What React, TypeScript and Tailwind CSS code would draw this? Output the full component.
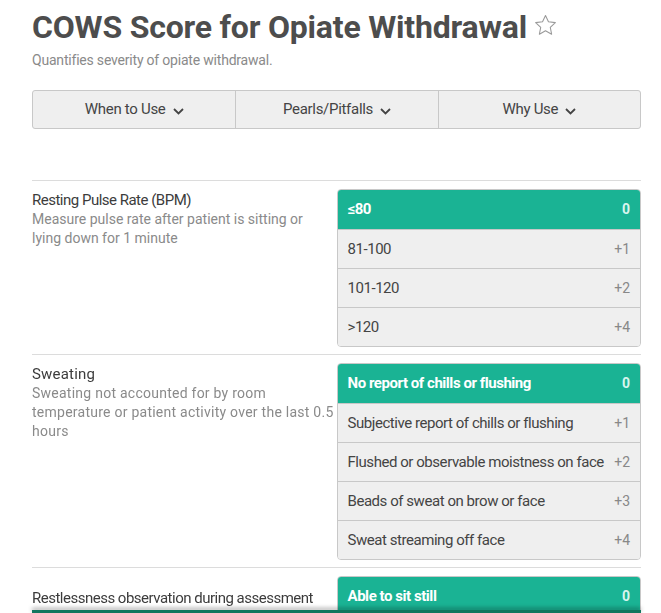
import React from "react";

type Opt = { label: string; score: string };
type Sec = { title: string; desc?: string[]; opts: Opt[]; wide?: boolean; low?: boolean };

const sections: Sec[] = [
  {
    title: "Resting Pulse Rate (BPM)",
    desc: ["Measure pulse rate after patient is sitting or", "lying down for 1 minute"],
    opts: [
      { label: "≤80", score: "0" },
      { label: "81-100", score: "+1" },
      { label: "101-120", score: "+2" },
      { label: ">120", score: "+4" },
    ],
  },
  {
    title: "Sweating",
    desc: ["Sweating not accounted for by room", "temperature or patient activity over the last 0.5", "hours"],
    wide: true,
    opts: [
      { label: "No report of chills or flushing", score: "0" },
      { label: "Subjective report of chills or flushing", score: "+1" },
      { label: "Flushed or observable moistness on face", score: "+2" },
      { label: "Beads of sweat on brow or face", score: "+3" },
      { label: "Sweat streaming off face", score: "+4" },
    ],
  },
  {
    title: "Restlessness observation during assessment",
    low: true,
    opts: [
      { label: "Able to sit still", score: "0" },
      { label: "Reports difficulty sitting still, but is able to do so", score: "+1" },
      { label: "Frequent shifting or extraneous movements of legs/arms", score: "+3" },
      { label: "Unable to sit still for more than a few seconds", score: "+5" },
    ],
  },
];

function Chevron() {
  return (
    <svg width="11" height="7" viewBox="0 0 11 7" className="ml-[7px] mt-[3px]" fill="none">
      <path d="M1 1l4.5 4.5L10 1" stroke="#444" strokeWidth="1.8" />
    </svg>
  );
}

function Star() {
  return (
    <svg width="23" height="22" viewBox="0 0 24 23" fill="none" className="ml-[7px] mt-[-4px]">
      <path
        d="M12 1.5l3.1 6.6 7.2.9-5.3 5 1.4 7.1L12 17.6l-6.4 3.5 1.4-7.1-5.3-5 7.2-.9z"
        stroke="#999"
        strokeWidth="1.1"
        strokeLinejoin="round"
      />
    </svg>
  );
}

export default function App() {
  return (
    <div className="bg-white min-h-screen text-[#444]" style={{ fontFamily: "Roboto, 'Liberation Sans', sans-serif" }}>
      <div className="ml-[32px] w-[609px]">
        <div className="flex items-center pt-[8px]">
          <h1 className="text-[32px] leading-[38px] font-bold text-[#4d4d4d] tracking-[-0.2px]">
            COWS Score for Opiate Withdrawal
          </h1>
          <Star />
        </div>
        <p className="text-[14px] leading-[18px] text-[#8a8a8a] mt-[5px] tracking-[-0.2px]">
          Quantifies severity of opiate withdrawal.
        </p>
        <div className="mt-[21px] grid grid-cols-3 h-[39px] border border-[#c8c8c8] rounded-[3px] bg-[#efefef]">
          {["When to Use", "Pearls/Pitfalls", "Why Use"].map((t, i) => (
            <div
              key={t}
              className={`flex items-center justify-center text-[15px] text-[#444] tracking-[-0.3px] ${i > 0 ? "border-l border-[#c8c8c8]" : ""}`}
            >
              {t}
              <Chevron />
            </div>
          ))}
        </div>
        <div className="mt-[51px]">
          {sections.map((s) => (
            <div key={s.title} className="border-t border-[#dcdcdc] pt-[8px] pb-[7px] grid grid-cols-2">
              <div className={`relative z-10 ${s.low ? "pt-[13px]" : "pt-[2px]"}`}>
                <div className={`text-[15px] leading-[19px] text-[#3c3c3c] ${s.wide ? "tracking-[0.2px]" : "tracking-[-0.5px]"}`}>
                  {s.title}
                </div>
                {s.desc && (
                  <div
                    className={`leading-[19px] text-[#8a8a8a] text-[14px] whitespace-nowrap ${
                      s.wide ? "tracking-[0.25px]" : "tracking-[0px]"
                    }`}
                  >
                    {s.desc.map((l) => (
                      <div key={l}>{l}</div>
                    ))}
                  </div>
                )}
              </div>
              <div className="border border-[#c8c8c8] rounded-[4px] overflow-hidden">
                {s.opts.map((o, i) => (
                  <div
                    key={o.label}
                    className={`h-[39px] flex items-center justify-between px-[10px] ${i > 0 ? "border-t border-[#c8c8c8]" : ""} ${
                      i === 0 ? "bg-[#1ab394] text-white font-bold" : "bg-[#efefef] text-[#444]"
                    }`}
                  >
                    <span className="text-[15px] tracking-[-0.45px] whitespace-nowrap">{o.label}</span>
                    <span className={`text-[14px] ${i === 0 ? "text-[#d8f5ee]" : "text-[#888]"}`}>{o.score}</span>
                  </div>
                ))}
              </div>
            </div>
          ))}
        </div>
      </div>
      <div className="fixed bottom-0 left-[32px] w-[609px] h-[3px] bg-[#13765f] shadow-[0_-2px_4px_rgba(0,0,0,0.35)]" />
    </div>
  );
}
